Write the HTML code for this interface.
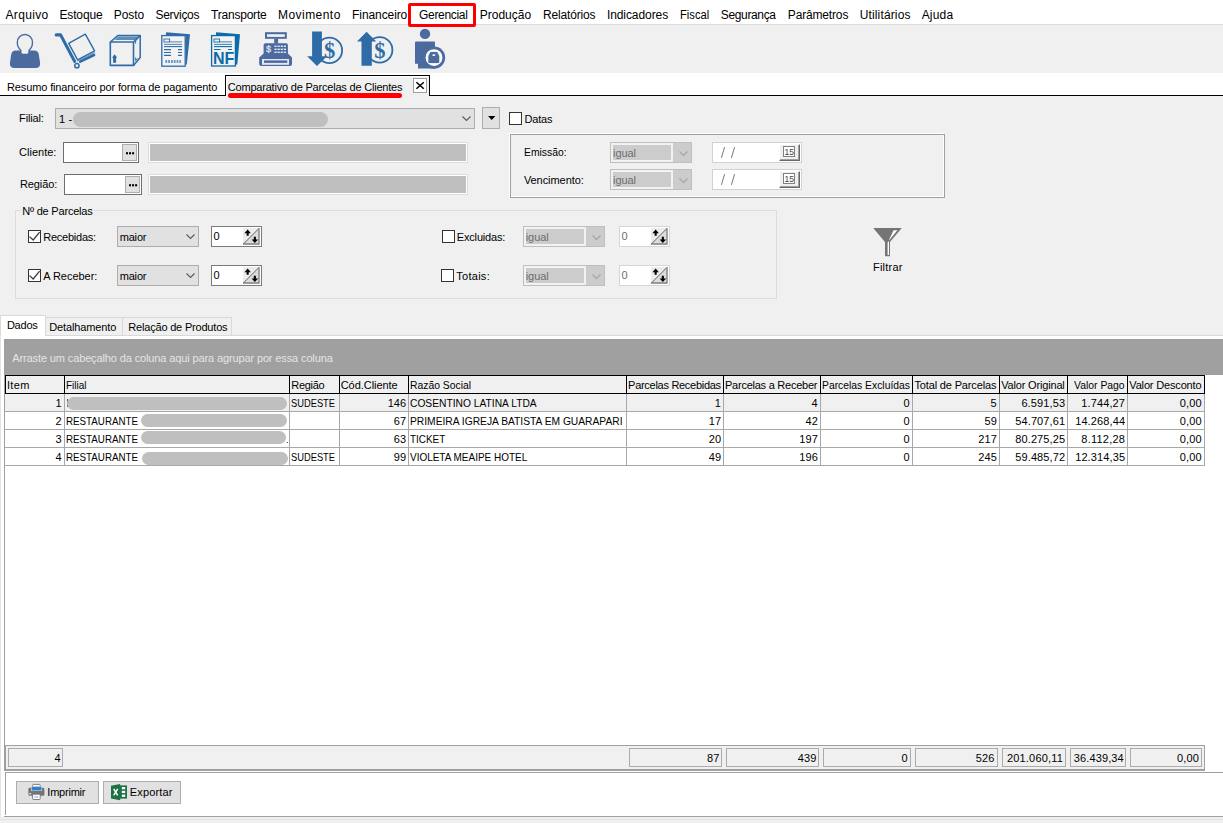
<!DOCTYPE html>
<html><head><meta charset="utf-8"><title>Comparativo de Parcelas de Clientes</title>
<style>
html,body{margin:0;padding:0}
body{width:1223px;height:823px;overflow:hidden;position:relative;background:#f0f0f0;font-family:"Liberation Sans",sans-serif;font-size:11px}
.a{position:absolute;box-sizing:border-box}
.t{position:absolute;white-space:pre;line-height:1;transform-origin:0 0;font-family:"Liberation Sans",sans-serif}
.cb{background:#e1e1e1;border:1px solid #adadad}
.cbd{background:#cccccc;border:1px solid #bfbfbf}
.chk{background:#fff;border:1px solid #333}
.pill{background:#bfbfbf;border-radius:8px}
svg{position:absolute;overflow:visible}
</style></head><body>
<div class="a " style="left:0px;top:0px;width:1223px;height:24px;background:#fff"></div>
<div class="a " style="left:0px;top:24px;width:1223px;height:49px;background:#f0f0f0"></div>
<div class="a " style="left:0px;top:24px;width:1223px;height:1px;background:#dddddd"></div>
<div class="a " style="left:0px;top:73px;width:1223px;height:22px;background:#fff"></div>
<div class="a " style="left:0px;top:95px;width:1223px;height:1px;background:#000"></div>
<div class="a " style="left:408px;top:3px;width:68px;height:24px;border:3px solid #ff0000;border-radius:2px"></div>
<div class="a " style="left:225px;top:75px;width:205px;height:21px;background:#f0f0f0;border:1px solid #000;border-bottom:none;box-shadow:inset 1px 1px 0 #fff"></div>
<div class="a " style="left:228px;top:93px;width:174.2px;height:5px;background:#ff0000;border-radius:2.5px"></div>
<div class="a " style="left:413px;top:78px;width:14px;height:15px;background:#fff;border:1px solid #a0a0a0"></div>
<svg style="left:413px;top:78px" width="14" height="15" viewBox="0 0 14 15"><path d="M3.4 4.2 L10.8 10.8 M10.8 4.2 L3.4 10.8" stroke="#000" stroke-width="1.5" fill="none"/></svg>
<svg style="left:0px;top:0px" width="1223" height="75" viewBox="0 0 1223 75">
<g fill="#4a6aa0">
 <path d="M16 50.5 H34 Q38.2 50.5 38.8 54.5 L40.1 63 Q40.6 68.1 35.5 68.1 H14.5 Q9.4 68.1 9.9 63 L11.2 54.5 Q11.8 50.5 16 50.5 Z"/>
</g>
<path d="M20.8 53.5 V50.2 Q17.3 47 17.3 42.4 A7.6 7.9 0 0 1 32.5 42.4 Q32.5 47 29 50.2 V53.5 Q24.9 55.6 20.8 53.5 Z" fill="#f0f0f0" stroke="#4a6aa0" stroke-width="1.4"/>
<g stroke="#2e6ca8" fill="none" stroke-linecap="round" stroke-linejoin="round">
 <path d="M56.2 34.9 H60.6 L74.6 61.4" stroke-width="3.1"/>
 <path d="M80.2 61.6 L94 55" stroke-width="2.7"/>
 <path d="M68.7 43.3 L85.3 34.2 L94.6 50.8 L77.6 59.8 Z" stroke-width="1.4"/>
 <path d="M77.4 61 L94.4 52.6" stroke-width="0.7"/>
 <circle cx="76.9" cy="65.7" r="2.15" stroke-width="1.5"/>
</g>
<g stroke="#2e6ca8" fill="none" stroke-linejoin="round">
 <rect x="110.3" y="42" width="23.2" height="23.4" stroke-width="1.6"/>
 <path d="M110.3 42 L117.8 35.6 H140.2 L133.5 42" stroke-width="1.5"/>
 <path d="M140.2 35.6 V57.6 L133.5 65.4" stroke-width="1.5"/>
 <path d="M114.5 40 L118.5 36.6 H139 L135 40 Z" fill="#2e6ca8" stroke="none" opacity="0.75"/>
 <path d="M135.6 43.6 V40.8 L137.6 38.9 M135.6 57.4 V60.6 L137.6 58.2" stroke-width="0.9"/>
 <path d="M114.6 54.2 L117.2 57.7 H116.1 V62.8 H113.1 V57.7 H112 Z" fill="#2e6ca8" stroke="none"/>
</g>
<g>
 <path d="M166 32.3 L190 34.3 L186.8 64.6 L185.4 64.6 L185.4 35 L166 35 Z" fill="#2e6ca8"/>
 <rect x="161.8" y="35.6" width="23.4" height="30.6" fill="#f3f3f3" stroke="#2e6ca8" stroke-width="1.3"/>
 <rect x="164" y="39" width="5.6" height="3" fill="none" stroke="#2e6ca8" stroke-width="0.9"/>
 <g stroke="#2e6ca8" stroke-width="1.1">
  <path d="M169.6 41.8 H182" opacity="0.5" stroke-width="1.6"/>
  <path d="M164 44.4 H182" opacity="0.75"/>
  <path d="M164 46.6 H182"/>
  <path d="M164 49.6 H171 M178 49.6 H182"/>
  <path d="M164 52.5 H171 M178 52.5 H182"/>
  <path d="M164 55.4 H171 M178 55.4 H182"/>
  <path d="M165.4 61.6 H181" stroke-width="3" opacity="0.7" stroke-dasharray="1.8 1"/>
 </g>
</g>
<g>
 <path d="M216 32.3 L240 34.3 L237.3 64.6 L235.6 64.6 L235.6 35 L216 35 Z" fill="#0c6ba8"/>
 <rect x="211.6" y="35.6" width="23.8" height="30.4" fill="#f3f3f3" stroke="#0c6ba8" stroke-width="1.3"/>
 <rect x="214" y="39" width="5.6" height="3" fill="none" stroke="#0c6ba8" stroke-width="0.9"/>
 <g stroke="#0c6ba8" stroke-width="1.1">
  <path d="M219.6 41.8 H232" opacity="0.5" stroke-width="1.6"/>
  <path d="M214 44.4 H232" opacity="0.75"/>
  <path d="M214 46.6 H232"/>
  <path d="M214 49.5 H220.6 M228 49.5 H232"/>
 </g>
 <text x="213" y="63.8" font-family="Liberation Sans, sans-serif" font-weight="bold" font-size="16.6" fill="#0c6ba8" textLength="21.4" lengthAdjust="spacingAndGlyphs">NF</text>
</g>
<g fill="#4a6aa0">
 <rect x="265" y="32.2" width="21.8" height="6.6"/>
 <rect x="267" y="34.2" width="17.8" height="2.7" fill="#f0f0f0"/>
 <rect x="274.2" y="38.6" width="3.9" height="5"/>
 <path d="M265.4 43.2 H286.2 Q287.9 43.2 287.9 45 V53.4 L292 57.6 V64 Q292 66 290 66 H261.2 Q259.2 66 259.2 64 V57.6 L263.6 53.4 V45 Q263.6 43.2 265.4 43.2 Z"/>
 <rect x="262" y="59" width="27" height="5.8" fill="#e6e8f2"/><rect x="264" y="60.4" width="23.3" height="2.5" fill="#4a6aa0"/>
 <text x="266" y="51.8" font-family="Liberation Sans, sans-serif" font-size="9.2" fill="#dfe4f0" stroke="#dfe4f0" stroke-width="0.25">$</text>
 <g fill="#f0f2f8">
  <rect x="274.4" y="45.6" width="2.3" height="1.3"/><rect x="277.5" y="45.6" width="2.3" height="1.3"/><rect x="280.6" y="45.6" width="2.3" height="1.3"/><rect x="283.7" y="45.6" width="2.3" height="1.3"/>
  <rect x="274.4" y="48.6" width="2.3" height="1.3"/><rect x="277.5" y="48.6" width="2.3" height="1.3"/><rect x="280.6" y="48.6" width="2.3" height="1.3"/><rect x="283.7" y="48.6" width="2.3" height="1.3"/>
  <rect x="274.4" y="51.6" width="2.3" height="1.3"/><rect x="277.5" y="51.6" width="2.3" height="1.3"/><rect x="280.6" y="51.6" width="2.3" height="1.3"/><rect x="283.7" y="51.6" width="2.3" height="1.3"/>
 </g>
</g>
<g>
 <circle cx="329.4" cy="50.4" r="12.7" fill="none" stroke="#2e6ca8" stroke-width="1.8"/>
 <text x="329.6" y="58" text-anchor="middle" font-family="Liberation Serif, serif" font-weight="bold" font-size="22.5" fill="#2e6ca8">$</text>
 <path d="M312.1 31.6 H321.9 V56.3 H327 L317 66 L307.2 56.3 H312.1 Z" fill="#2e6ca8"/>
</g>
<g>
 <circle cx="379.7" cy="49.9" r="12.7" fill="none" stroke="#2e6ca8" stroke-width="1.8"/>
 <text x="379.9" y="57.6" text-anchor="middle" font-family="Liberation Serif, serif" font-weight="bold" font-size="22.5" fill="#2e6ca8">$</text>
 <path d="M361.5 65.8 V41.5 H357 L366.6 31.7 L376.2 41.5 H371.8 V65.8 Z" fill="#2e6ca8"/>
</g>
<g fill="#4a6aa0">
 <circle cx="425" cy="33.9" r="5.2"/>
 <path d="M416 41.4 H434 Q435 41.4 435 42.4 V68.6 H418 V63.8 H415 V42.4 Q415 41.4 416 41.4 Z"/>
 <circle cx="434" cy="57.6" r="11.2"/>
 <circle cx="434" cy="57.6" r="7.7" fill="#f0f0f0" stroke="#fff" stroke-width="1.5"/>
 <path d="M428.4 62.9 V56 L430.4 51.9 H437.2 L439.2 56 V62.9 Z"/>
 <rect x="432.4" y="54.3" width="2.9" height="1.6" rx="0.6" fill="#f4f4f8"/>
</g>
</svg>
<div class="a cb" style="left:55px;top:108px;width:420px;height:21px;"></div>
<div class="a pill" style="left:73px;top:112px;width:255px;height:15.4px;"></div>
<svg style="left:461.5px;top:115.5px" width="9" height="5" viewBox="0 0 9 5"><path d="M0.5 0.5 L4.5 4.5 L8.5 0.5" fill="none" stroke="#5a5a5a" stroke-width="1.1"/></svg>
<div class="a cb" style="left:482px;top:107px;width:18px;height:22px;"></div>
<svg style="left:487.5px;top:116px" width="8" height="4.5" viewBox="0 0 8 4.5"><path d="M0 0 H7.4 L3.7 4 Z" fill="#000"/></svg>
<div class="a chk" style="left:509px;top:112px;width:13px;height:13px;"></div>
<div class="a " style="left:63px;top:142px;width:76px;height:21px;background:#fff;border:1px solid #6e6e6e"></div>
<div class="a cb" style="left:122px;top:144px;width:15px;height:17px;"></div>
<svg style="left:122px;top:144px" width="15" height="17" viewBox="0 0 15 17"><g fill="#000"><rect x="4" y="8.2" width="2" height="2.1"/><rect x="7.05" y="8.2" width="2" height="2.1"/><rect x="10.1" y="8.2" width="2" height="2.1"/></g></svg>
<div class="a " style="left:64px;top:174px;width:78px;height:21px;background:#fff;border:1px solid #6e6e6e"></div>
<div class="a cb" style="left:125px;top:176px;width:15px;height:17px;"></div>
<svg style="left:125px;top:176px" width="15" height="17" viewBox="0 0 15 17"><g fill="#000"><rect x="4" y="8.2" width="2" height="2.1"/><rect x="7.05" y="8.2" width="2" height="2.1"/><rect x="10.1" y="8.2" width="2" height="2.1"/></g></svg>
<div class="a " style="left:148px;top:142px;width:320px;height:21px;background:#fff;border:1px solid #dcdcdc"></div>
<div class="a " style="left:150px;top:144px;width:316px;height:17px;background:#bfbfbf"></div>
<div class="a " style="left:148px;top:174px;width:320px;height:21px;background:#fff;border:1px solid #dcdcdc"></div>
<div class="a " style="left:150px;top:176px;width:316px;height:17px;background:#bfbfbf"></div>
<div class="a " style="left:509px;top:133px;width:435px;height:64px;border:1px solid #fff"></div>
<div class="a " style="left:510px;top:134px;width:435px;height:64px;border:1px solid #a0a0a0"></div>
<div class="a " style="left:610px;top:142px;width:82px;height:21px;background:#f2f2f2;border:1px solid #bfbfbf"></div>
<div class="a " style="left:613px;top:145px;width:57.8px;height:15px;background:#cccccc"></div>
<div class="a " style="left:673.3px;top:143px;width:17.7px;height:19px;background:#cccccc"></div>
<svg style="left:678.8px;top:150.6px" width="9" height="5" viewBox="0 0 9 5"><path d="M0.5 0.5 L4.5 4.5 L8.5 0.5" fill="none" stroke="#a4a4a4" stroke-width="1.1"/></svg>
<div class="a " style="left:610px;top:169px;width:82px;height:21px;background:#f2f2f2;border:1px solid #bfbfbf"></div>
<div class="a " style="left:613px;top:172px;width:57.8px;height:15px;background:#cccccc"></div>
<div class="a " style="left:673.3px;top:170px;width:17.7px;height:19px;background:#cccccc"></div>
<svg style="left:678.8px;top:177.6px" width="9" height="5" viewBox="0 0 9 5"><path d="M0.5 0.5 L4.5 4.5 L8.5 0.5" fill="none" stroke="#a4a4a4" stroke-width="1.1"/></svg>
<div class="a " style="left:712px;top:142px;width:90px;height:21px;background:#fff;border:1px solid #d2d2d2"></div>
<div class="a " style="left:779px;top:144px;width:21px;height:17px;background:#f0f0f0;border-top:1px solid #fff;border-left:1px solid #fff;border-right:1px solid #696969;border-bottom:1px solid #696969"></div>
<div class="a " style="left:780px;top:145px;width:19px;height:15px;border-right:1px solid #a0a0a0;border-bottom:1px solid #a0a0a0"></div>
<div class="a " style="left:783px;top:146px;width:12px;height:11px;background:#fff;border:1px solid #808080"></div>
<svg style="left:720px;top:146px" width="20" height="13" viewBox="0 0 20 13"><path d="M4.6 1.2 L1.4 11.8 M14.6 1.2 L11.4 11.8" stroke="#808080" stroke-width="1.05" fill="none"/></svg>
<div class="a " style="left:712px;top:169px;width:90px;height:21px;background:#fff;border:1px solid #d2d2d2"></div>
<div class="a " style="left:779px;top:171px;width:21px;height:17px;background:#f0f0f0;border-top:1px solid #fff;border-left:1px solid #fff;border-right:1px solid #696969;border-bottom:1px solid #696969"></div>
<div class="a " style="left:780px;top:172px;width:19px;height:15px;border-right:1px solid #a0a0a0;border-bottom:1px solid #a0a0a0"></div>
<div class="a " style="left:783px;top:173px;width:12px;height:11px;background:#fff;border:1px solid #808080"></div>
<svg style="left:720px;top:173px" width="20" height="13" viewBox="0 0 20 13"><path d="M4.6 1.2 L1.4 11.8 M14.6 1.2 L11.4 11.8" stroke="#808080" stroke-width="1.05" fill="none"/></svg>
<div class="a " style="left:15px;top:210px;width:762px;height:88.5px;border:1px solid #dcdcdc"></div>
<div class="a " style="left:21px;top:204px;width:73px;height:12px;background:#f0f0f0"></div>
<div class="a chk" style="left:28px;top:230px;width:13px;height:13px;"></div>
<svg style="left:28px;top:230px" width="13" height="13" viewBox="0 0 13 13"><path d="M1.5 6.6 L5.2 10 L11.6 2.2" fill="none" stroke="#3a3a3a" stroke-width="1.25"/></svg>
<div class="a chk" style="left:28px;top:269px;width:13px;height:13px;"></div>
<svg style="left:28px;top:269px" width="13" height="13" viewBox="0 0 13 13"><path d="M1.5 6.6 L5.2 10 L11.6 2.2" fill="none" stroke="#3a3a3a" stroke-width="1.25"/></svg>
<div class="a chk" style="left:442px;top:230px;width:13px;height:13px;"></div>
<div class="a chk" style="left:441px;top:269px;width:13px;height:13px;"></div>
<div class="a cb" style="left:117px;top:226px;width:82px;height:21px;"></div>
<svg style="left:185.5px;top:234.3px" width="9" height="5" viewBox="0 0 9 5"><path d="M0.5 0.5 L4.5 4.5 L8.5 0.5" fill="none" stroke="#5a5a5a" stroke-width="1.1"/></svg>
<div class="a cb" style="left:117px;top:265px;width:82px;height:21px;"></div>
<svg style="left:185.5px;top:273.3px" width="9" height="5" viewBox="0 0 9 5"><path d="M0.5 0.5 L4.5 4.5 L8.5 0.5" fill="none" stroke="#5a5a5a" stroke-width="1.1"/></svg>
<div class="a " style="left:523px;top:226px;width:82px;height:21px;background:#f2f2f2;border:1px solid #bfbfbf"></div>
<div class="a " style="left:526px;top:229px;width:57.8px;height:15px;background:#cccccc"></div>
<div class="a " style="left:586.3px;top:227px;width:17.7px;height:19px;background:#cccccc"></div>
<svg style="left:591.8px;top:234.6px" width="9" height="5" viewBox="0 0 9 5"><path d="M0.5 0.5 L4.5 4.5 L8.5 0.5" fill="none" stroke="#a4a4a4" stroke-width="1.1"/></svg>
<div class="a " style="left:523px;top:265px;width:82px;height:21px;background:#f2f2f2;border:1px solid #bfbfbf"></div>
<div class="a " style="left:526px;top:268px;width:57.8px;height:15px;background:#cccccc"></div>
<div class="a " style="left:586.3px;top:266px;width:17.7px;height:19px;background:#cccccc"></div>
<svg style="left:591.8px;top:273.6px" width="9" height="5" viewBox="0 0 9 5"><path d="M0.5 0.5 L4.5 4.5 L8.5 0.5" fill="none" stroke="#a4a4a4" stroke-width="1.1"/></svg>
<div class="a " style="left:211px;top:226px;width:51px;height:21px;background:#fff;border:1px solid #7a7a7a"></div>
<svg style="left:243.2px;top:228.2px" width="16.6" height="16.6" viewBox="0 0 16.6 16.6"><rect x="0" y="0" width="16.6" height="16.6" fill="#ececec"/>
<path d="M0 16.6 L16.6 0 V16.6 Z" fill="#dcdcdc"/>
<path d="M0.2 16.2 L16.2 0.2" stroke="#606060" stroke-width="1"/>
<path d="M0 16 H16 V0.4" stroke="#828282" stroke-width="1.3" fill="none"/>
<path d="M4.65 1.6 L7.9 5.2 H5.7 V7.8 H3.6 V5.2 H1.4 Z" fill="#000"/>
<path d="M11.85 15 L15.1 11.4 H12.9 V8.8 H10.8 V11.4 H8.6 Z" fill="#000"/></svg>
<div class="a " style="left:211px;top:265px;width:51px;height:21px;background:#fff;border:1px solid #7a7a7a"></div>
<svg style="left:243.2px;top:267.2px" width="16.6" height="16.6" viewBox="0 0 16.6 16.6"><rect x="0" y="0" width="16.6" height="16.6" fill="#ececec"/>
<path d="M0 16.6 L16.6 0 V16.6 Z" fill="#dcdcdc"/>
<path d="M0.2 16.2 L16.2 0.2" stroke="#606060" stroke-width="1"/>
<path d="M0 16 H16 V0.4" stroke="#828282" stroke-width="1.3" fill="none"/>
<path d="M4.65 1.6 L7.9 5.2 H5.7 V7.8 H3.6 V5.2 H1.4 Z" fill="#000"/>
<path d="M11.85 15 L15.1 11.4 H12.9 V8.8 H10.8 V11.4 H8.6 Z" fill="#000"/></svg>
<div class="a " style="left:619px;top:226px;width:51px;height:21px;background:#fff;border:1px solid #d6d6d6"></div>
<svg style="left:651.2px;top:228.2px" width="16.6" height="16.6" viewBox="0 0 16.6 16.6"><rect x="0" y="0" width="16.6" height="16.6" fill="#ececec"/>
<path d="M0 16.6 L16.6 0 V16.6 Z" fill="#dcdcdc"/>
<path d="M0.2 16.2 L16.2 0.2" stroke="#606060" stroke-width="1"/>
<path d="M0 16 H16 V0.4" stroke="#828282" stroke-width="1.3" fill="none"/>
<path d="M4.65 1.6 L7.9 5.2 H5.7 V7.8 H3.6 V5.2 H1.4 Z" fill="#000"/>
<path d="M11.85 15 L15.1 11.4 H12.9 V8.8 H10.8 V11.4 H8.6 Z" fill="#000"/></svg>
<div class="a " style="left:619px;top:265px;width:51px;height:21px;background:#fff;border:1px solid #d6d6d6"></div>
<svg style="left:651.2px;top:267.2px" width="16.6" height="16.6" viewBox="0 0 16.6 16.6"><rect x="0" y="0" width="16.6" height="16.6" fill="#ececec"/>
<path d="M0 16.6 L16.6 0 V16.6 Z" fill="#dcdcdc"/>
<path d="M0.2 16.2 L16.2 0.2" stroke="#606060" stroke-width="1"/>
<path d="M0 16 H16 V0.4" stroke="#828282" stroke-width="1.3" fill="none"/>
<path d="M4.65 1.6 L7.9 5.2 H5.7 V7.8 H3.6 V5.2 H1.4 Z" fill="#000"/>
<path d="M11.85 15 L15.1 11.4 H12.9 V8.8 H10.8 V11.4 H8.6 Z" fill="#000"/></svg>
<svg style="left:873px;top:227.8px" width="29" height="28.2" viewBox="0 0 29 28.2"><path d="M0.6 0.6 Q0 0 1 0 H28 Q29 0 28.4 0.6 L17 14 V28.2 H12 V14 Z" fill="#757575"/><path d="M20.6 2.2 H24.4 L16 12.6 V12 Z" fill="#fff"/><path d="M14.6 14.4 L16 13.2 V27 H14.6 Z" fill="#fff"/></svg>
<div class="a " style="left:0px;top:335px;width:1223px;height:482px;background:#fff;border-left:1px solid #e4e4e4"></div>
<div class="a " style="left:45px;top:317px;width:78px;height:19px;background:#f0f0f0;border:1px solid #d9d9d9"></div>
<div class="a " style="left:122px;top:317px;width:110px;height:19px;background:#f0f0f0;border:1px solid #d9d9d9"></div>
<div class="a " style="left:0px;top:315px;width:46px;height:21px;background:#fff;border:1px solid #d9d9d9;border-bottom:none"></div>
<div class="a " style="left:46px;top:335px;width:1177px;height:1px;background:#d9d9d9"></div>
<div class="a " style="left:4px;top:339px;width:1219px;height:36.4px;background:#a0a0a0"></div>
<div class="a " style="left:4px;top:375px;width:1px;height:396px;background:#a0a0a0"></div>
<div class="a " style="left:5px;top:375px;width:1200px;height:19px;background:#f0f0f0;border:1px solid #000"></div>
<div class="a " style="left:64px;top:375px;width:1px;height:19px;background:#000"></div>
<div class="a " style="left:289px;top:375px;width:1px;height:19px;background:#000"></div>
<div class="a " style="left:339px;top:375px;width:1px;height:19px;background:#000"></div>
<div class="a " style="left:408px;top:375px;width:1px;height:19px;background:#000"></div>
<div class="a " style="left:626px;top:375px;width:1px;height:19px;background:#000"></div>
<div class="a " style="left:723px;top:375px;width:1px;height:19px;background:#000"></div>
<div class="a " style="left:820px;top:375px;width:1px;height:19px;background:#000"></div>
<div class="a " style="left:912px;top:375px;width:1px;height:19px;background:#000"></div>
<div class="a " style="left:999px;top:375px;width:1px;height:19px;background:#000"></div>
<div class="a " style="left:1067px;top:375px;width:1px;height:19px;background:#000"></div>
<div class="a " style="left:1127px;top:375px;width:1px;height:19px;background:#000"></div>
<div class="a " style="left:5px;top:394px;width:1199px;height:17px;background:#f0f0f0"></div>
<div class="a " style="left:5px;top:411px;width:1200px;height:1px;background:#a8a8a8"></div>
<div class="a " style="left:5px;top:429px;width:1200px;height:1px;background:#a8a8a8"></div>
<div class="a " style="left:5px;top:447px;width:1200px;height:1px;background:#a8a8a8"></div>
<div class="a " style="left:5px;top:465px;width:1200px;height:1px;background:#a8a8a8"></div>
<div class="a " style="left:64px;top:394px;width:1px;height:72px;background:#a8a8a8"></div>
<div class="a " style="left:289px;top:394px;width:1px;height:72px;background:#a8a8a8"></div>
<div class="a " style="left:339px;top:394px;width:1px;height:72px;background:#a8a8a8"></div>
<div class="a " style="left:408px;top:394px;width:1px;height:72px;background:#a8a8a8"></div>
<div class="a " style="left:626px;top:394px;width:1px;height:72px;background:#a8a8a8"></div>
<div class="a " style="left:723px;top:394px;width:1px;height:72px;background:#a8a8a8"></div>
<div class="a " style="left:820px;top:394px;width:1px;height:72px;background:#a8a8a8"></div>
<div class="a " style="left:912px;top:394px;width:1px;height:72px;background:#a8a8a8"></div>
<div class="a " style="left:999px;top:394px;width:1px;height:72px;background:#a8a8a8"></div>
<div class="a " style="left:1067px;top:394px;width:1px;height:72px;background:#a8a8a8"></div>
<div class="a " style="left:1127px;top:394px;width:1px;height:72px;background:#a8a8a8"></div>
<div class="a " style="left:1204px;top:394px;width:1px;height:72px;background:#a8a8a8"></div>
<div class="a " style="left:66.6px;top:399px;width:1px;height:8px;background:#555"></div>
<div class="a pill" style="left:67px;top:397px;width:220.2px;height:13px;"></div>
<div class="a pill" style="left:141px;top:413.7px;width:146.2px;height:13.2px;"></div>
<div class="a pill" style="left:141px;top:431px;width:144.7px;height:12.5px;"></div>
<div class="a " style="left:286.6px;top:441.6px;width:1.2px;height:1.4px;background:#444"></div>
<div class="a pill" style="left:142px;top:452px;width:145.6px;height:12.6px;"></div>
<div class="a " style="left:5px;top:745px;width:1200px;height:26px;background:#f0f0f0;border:1px solid #a0a0a0;border-bottom:2px solid #a0a0a0"></div>
<div class="a " style="left:8px;top:748px;width:55px;height:19px;border:1px solid #ababab"></div>
<div class="a " style="left:629px;top:748px;width:93px;height:19px;border:1px solid #ababab"></div>
<div class="a " style="left:726px;top:748px;width:93px;height:19px;border:1px solid #ababab"></div>
<div class="a " style="left:823px;top:748px;width:88px;height:19px;border:1px solid #ababab"></div>
<div class="a " style="left:915px;top:748px;width:83px;height:19px;border:1px solid #ababab"></div>
<div class="a " style="left:1002px;top:748px;width:64px;height:19px;border:1px solid #ababab"></div>
<div class="a " style="left:1070px;top:748px;width:56px;height:19px;border:1px solid #ababab"></div>
<div class="a " style="left:1130px;top:748px;width:72px;height:19px;border:1px solid #ababab"></div>
<div class="a " style="left:5px;top:772px;width:1218px;height:43px;background:#fff;border-top:1px solid #a0a0a0;border-left:1px solid #a0a0a0"></div>
<div class="a " style="left:4px;top:816px;width:1219px;height:1px;background:#a0a0a0"></div>
<div class="a cb" style="left:16.2px;top:781px;width:82.8px;height:23px;"></div>
<div class="a cb" style="left:103.3px;top:781px;width:77.8px;height:23px;"></div>
<svg style="left:27.6px;top:784.2px" width="17" height="16" viewBox="0 0 17 16"><rect x="4.6" y="0.4" width="7.6" height="4" rx="0.8" fill="#fff" stroke="#747474" stroke-width="0.9"/><path d="M0.4 5 Q0.4 3.7 1.7 3.7 H15.1 Q16.4 3.7 16.4 5 V10.5 Q16.4 11.8 15.1 11.8 H1.7 Q0.4 11.8 0.4 10.5 Z" fill="#747474"/><rect x="3" y="2.3" width="11" height="4.7" fill="#fff"/><rect x="3.5" y="2.6" width="10.1" height="4" fill="#3a7cc2"/><rect x="1.2" y="9.2" width="2" height="1.2" fill="#f0f0f0"/><rect x="4.6" y="10.2" width="7.6" height="5.3" rx="0.8" fill="#fff" stroke="#747474" stroke-width="0.9"/><path d="M6.4 13 H10.2" stroke="#7aa6d8" stroke-width="1"/></svg>
<svg style="left:111px;top:783.8px" width="16.4" height="16.2" viewBox="0 0 16.4 16.2"><rect x="7" y="1.4" width="9" height="13.2" fill="#1e7145"/><g fill="#fff"><rect x="10.8" y="3" width="3.4" height="2.3"/><rect x="10.8" y="6.8" width="3.4" height="2.3"/><rect x="10.8" y="10.6" width="3.4" height="2.3"/></g><path d="M0 1.8 L9.2 0 V16.2 L0 14.4 Z" fill="#1e7145"/><path d="M2.7 4.9 L6.7 11.3 M6.7 4.9 L2.7 11.3" stroke="#fff" stroke-width="1.5"/></svg>
<div class="a " style="left:0px;top:819px;width:1223px;height:1px;background:#e2e2e2"></div>
<div class="a " style="left:0px;top:820px;width:1223px;height:3px;background:#f0f0f0"></div>
<span class="t" style="left:5.50px;top:9px;font-size:12px;color:#000;letter-spacing:0.335px;">Arquivo</span>
<span class="t" style="left:59.40px;top:9px;font-size:12px;color:#000;letter-spacing:-0.124px;">Estoque</span>
<span class="t" style="left:113.70px;top:9px;font-size:12px;color:#000;letter-spacing:-0.022px;">Posto</span>
<span class="t" style="left:155.50px;top:9px;font-size:12px;color:#000;letter-spacing:-0.288px;">Serviços</span>
<span class="t" style="left:211.00px;top:9px;font-size:12px;color:#000;letter-spacing:-0.210px;">Transporte</span>
<span class="t" style="left:278.00px;top:9px;font-size:12px;color:#000;letter-spacing:0.452px;">Movimento</span>
<span class="t" style="left:352.10px;top:9px;font-size:12px;color:#000;letter-spacing:-0.092px;">Financeiro</span>
<span class="t" style="left:419.00px;top:9px;font-size:12px;color:#000;letter-spacing:-0.307px;">Gerencial</span>
<span class="t" style="left:479.80px;top:9px;font-size:12px;color:#000;letter-spacing:-0.011px;">Produção</span>
<span class="t" style="left:543.10px;top:9px;font-size:12px;color:#000;letter-spacing:-0.170px;">Relatórios</span>
<span class="t" style="left:606.90px;top:9px;font-size:12px;color:#000;letter-spacing:-0.075px;">Indicadores</span>
<span class="t" style="left:679.93px;top:9px;font-size:12px;color:#000;letter-spacing:0.000px;transform:scaleX(0.9326);">Fiscal</span>
<span class="t" style="left:720.80px;top:9px;font-size:12px;color:#000;letter-spacing:-0.356px;">Segurança</span>
<span class="t" style="left:787.80px;top:9px;font-size:12px;color:#000;letter-spacing:-0.159px;">Parâmetros</span>
<span class="t" style="left:859.70px;top:9px;font-size:12px;color:#000;letter-spacing:0.146px;">Utilitários</span>
<span class="t" style="left:921.70px;top:9px;font-size:12px;color:#000;letter-spacing:0.174px;">Ajuda</span>
<span class="t" style="left:7.00px;top:82px;font-size:11px;color:#000;letter-spacing:-0.127px;">Resumo financeiro por forma de pagamento</span>
<span class="t" style="left:227.80px;top:82px;font-size:11px;color:#000;letter-spacing:-0.203px;">Comparativo de Parcelas de Clientes</span>
<span class="t" style="left:19.10px;top:113px;font-size:11px;color:#000;letter-spacing:-0.145px;">Filial:</span>
<span class="t" style="left:59.10px;top:114px;font-size:11px;color:#000;letter-spacing:0.078px;">1 -</span>
<span class="t" style="left:19.10px;top:147px;font-size:11px;color:#000;letter-spacing:0.000px;">Cliente:</span>
<span class="t" style="left:19.90px;top:179px;font-size:11px;color:#000;letter-spacing:-0.070px;">Região:</span>
<span class="t" style="left:524.50px;top:114px;font-size:11px;color:#000;letter-spacing:-0.188px;">Datas</span>
<span class="t" style="left:523.93px;top:147px;font-size:11px;color:#000;letter-spacing:0.000px;transform:scaleX(0.9401);">Emissão:</span>
<span class="t" style="left:523.90px;top:175px;font-size:11px;color:#000;letter-spacing:-0.065px;">Vencimento:</span>
<span class="t" style="left:613.10px;top:148px;font-size:11px;color:#6d6d6d;letter-spacing:-0.113px;">igual</span>
<span class="t" style="left:613.10px;top:175px;font-size:11px;color:#6d6d6d;letter-spacing:-0.113px;">igual</span>
<span class="t" style="left:22.20px;top:206px;font-size:11px;color:#000;letter-spacing:-0.193px;">Nº de Parcelas</span>
<span class="t" style="left:43.20px;top:232px;font-size:11px;color:#000;letter-spacing:-0.227px;">Recebidas:</span>
<span class="t" style="left:43.20px;top:271px;font-size:11px;color:#000;letter-spacing:-0.025px;">A Receber:</span>
<span class="t" style="left:119.70px;top:232px;font-size:11px;color:#000;letter-spacing:-0.179px;">maior</span>
<span class="t" style="left:119.70px;top:271px;font-size:11px;color:#000;letter-spacing:-0.179px;">maior</span>
<span class="t" style="left:213.50px;top:231px;font-size:11px;color:#000;letter-spacing:0.000px;">0</span>
<span class="t" style="left:213.50px;top:270px;font-size:11px;color:#000;letter-spacing:0.000px;">0</span>
<span class="t" style="left:456.80px;top:232px;font-size:11px;color:#000;letter-spacing:-0.171px;">Excluidas:</span>
<span class="t" style="left:456.30px;top:271px;font-size:11px;color:#000;letter-spacing:0.267px;">Totais:</span>
<span class="t" style="left:525.70px;top:232px;font-size:11px;color:#6d6d6d;letter-spacing:-0.038px;">igual</span>
<span class="t" style="left:525.70px;top:271px;font-size:11px;color:#6d6d6d;letter-spacing:-0.038px;">igual</span>
<span class="t" style="left:621.40px;top:231px;font-size:11px;color:#6d6d6d;letter-spacing:0.000px;">0</span>
<span class="t" style="left:621.40px;top:270px;font-size:11px;color:#6d6d6d;letter-spacing:0.000px;">0</span>
<span class="t" style="left:873.00px;top:262px;font-size:11px;color:#000;letter-spacing:0.215px;">Filtrar</span>
<span class="t" style="left:6.90px;top:320px;font-size:11px;color:#000;letter-spacing:-0.224px;">Dados</span>
<span class="t" style="left:49.30px;top:322px;font-size:11px;color:#000;letter-spacing:-0.136px;">Detalhamento</span>
<span class="t" style="left:128.30px;top:322px;font-size:11px;color:#000;letter-spacing:-0.191px;">Relação de Produtos</span>
<span class="t" style="left:12.30px;top:353px;font-size:11px;color:#e4e4e4;letter-spacing:-0.125px;">Arraste um cabeçalho da coluna aqui para agrupar por essa coluna</span>
<span class="t" style="left:6.90px;top:380px;font-size:11px;color:#000;letter-spacing:0.398px;">Item</span>
<span class="t" style="left:66.25px;top:380px;font-size:11px;color:#000;letter-spacing:0.000px;transform:scaleX(0.9064);">Filial</span>
<span class="t" style="left:291.30px;top:380px;font-size:11px;color:#000;letter-spacing:-0.292px;">Região</span>
<span class="t" style="left:340.70px;top:380px;font-size:11px;color:#000;letter-spacing:-0.048px;">Cód.Cliente</span>
<span class="t" style="left:409.93px;top:380px;font-size:11px;color:#000;letter-spacing:0.000px;transform:scaleX(0.9416);">Razão Social</span>
<span class="t" style="left:628.10px;top:380px;font-size:11px;color:#000;letter-spacing:-0.285px;">Parcelas Recebidas</span>
<span class="t" style="left:725.00px;top:380px;font-size:11px;color:#000;letter-spacing:-0.242px;">Parcelas a Receber</span>
<span class="t" style="left:821.93px;top:380px;font-size:11px;color:#000;letter-spacing:0.000px;transform:scaleX(0.9401);">Parcelas Excluídas</span>
<span class="t" style="left:914.50px;top:380px;font-size:11px;color:#000;letter-spacing:-0.156px;">Total de Parcelas</span>
<span class="t" style="left:1001.20px;top:380px;font-size:11px;color:#000;letter-spacing:-0.171px;">Valor Original</span>
<span class="t" style="left:1073.83px;top:380px;font-size:11px;color:#000;letter-spacing:0.000px;transform:scaleX(0.9447);">Valor Pago</span>
<span class="t" style="left:1129.30px;top:380px;font-size:11px;color:#000;letter-spacing:-0.161px;">Valor Desconto</span>
<span class="t" style="left:55.48px;top:398px;font-size:11px;color:#000;letter-spacing:0.000px;">1</span>
<span class="t" style="left:291.38px;top:398px;font-size:11px;color:#000;letter-spacing:0.000px;transform:scaleX(0.8476);">SUDESTE</span>
<span class="t" style="left:387.64px;top:398px;font-size:11px;color:#000;letter-spacing:0.100px;">146</span>
<span class="t" style="left:409.93px;top:398px;font-size:11px;color:#000;letter-spacing:0.000px;transform:scaleX(0.9318);">COSENTINO LATINA LTDA</span>
<span class="t" style="left:714.78px;top:398px;font-size:11px;color:#000;letter-spacing:0.000px;">1</span>
<span class="t" style="left:811.58px;top:398px;font-size:11px;color:#000;letter-spacing:0.000px;">4</span>
<span class="t" style="left:903.58px;top:398px;font-size:11px;color:#000;letter-spacing:0.000px;">0</span>
<span class="t" style="left:990.58px;top:398px;font-size:11px;color:#000;letter-spacing:0.000px;">5</span>
<span class="t" style="left:1021.38px;top:398px;font-size:11px;color:#000;letter-spacing:0.127px;">6.591,53</span>
<span class="t" style="left:1081.28px;top:398px;font-size:11px;color:#000;letter-spacing:0.127px;">1.744,27</span>
<span class="t" style="left:1179.64px;top:398px;font-size:11px;color:#000;letter-spacing:0.179px;">0,00</span>
<span class="t" style="left:55.48px;top:416px;font-size:11px;color:#000;letter-spacing:0.000px;">2</span>
<span class="t" style="left:66.26px;top:416px;font-size:11px;color:#000;letter-spacing:0.000px;transform:scaleX(0.8877);">RESTAURANTE</span>
<span class="t" style="left:393.76px;top:416px;font-size:11px;color:#000;letter-spacing:0.190px;">67</span>
<span class="t" style="left:409.93px;top:416px;font-size:11px;color:#000;letter-spacing:0.000px;transform:scaleX(0.9322);">PRIMEIRA IGREJA BATISTA EM GUARAPARI</span>
<span class="t" style="left:708.66px;top:416px;font-size:11px;color:#000;letter-spacing:0.190px;">17</span>
<span class="t" style="left:805.46px;top:416px;font-size:11px;color:#000;letter-spacing:0.190px;">42</span>
<span class="t" style="left:903.58px;top:416px;font-size:11px;color:#000;letter-spacing:0.000px;">0</span>
<span class="t" style="left:984.46px;top:416px;font-size:11px;color:#000;letter-spacing:0.190px;">59</span>
<span class="t" style="left:1015.26px;top:416px;font-size:11px;color:#000;letter-spacing:0.113px;">54.707,61</span>
<span class="t" style="left:1075.16px;top:416px;font-size:11px;color:#000;letter-spacing:0.113px;">14.268,44</span>
<span class="t" style="left:1179.64px;top:416px;font-size:11px;color:#000;letter-spacing:0.179px;">0,00</span>
<span class="t" style="left:55.48px;top:434px;font-size:11px;color:#000;letter-spacing:0.000px;">3</span>
<span class="t" style="left:66.26px;top:434px;font-size:11px;color:#000;letter-spacing:0.000px;transform:scaleX(0.8877);">RESTAURANTE</span>
<span class="t" style="left:393.76px;top:434px;font-size:11px;color:#000;letter-spacing:0.190px;">63</span>
<span class="t" style="left:409.95px;top:434px;font-size:11px;color:#000;letter-spacing:0.000px;transform:scaleX(0.9023);">TICKET</span>
<span class="t" style="left:708.66px;top:434px;font-size:11px;color:#000;letter-spacing:0.190px;">20</span>
<span class="t" style="left:799.34px;top:434px;font-size:11px;color:#000;letter-spacing:0.100px;">197</span>
<span class="t" style="left:903.58px;top:434px;font-size:11px;color:#000;letter-spacing:0.000px;">0</span>
<span class="t" style="left:978.34px;top:434px;font-size:11px;color:#000;letter-spacing:0.100px;">217</span>
<span class="t" style="left:1015.26px;top:434px;font-size:11px;color:#000;letter-spacing:0.113px;">80.275,25</span>
<span class="t" style="left:1081.28px;top:434px;font-size:11px;color:#000;letter-spacing:0.243px;">8.112,28</span>
<span class="t" style="left:1179.64px;top:434px;font-size:11px;color:#000;letter-spacing:0.179px;">0,00</span>
<span class="t" style="left:55.48px;top:452px;font-size:11px;color:#000;letter-spacing:0.000px;">4</span>
<span class="t" style="left:66.26px;top:452px;font-size:11px;color:#000;letter-spacing:0.000px;transform:scaleX(0.8877);">RESTAURANTE</span>
<span class="t" style="left:291.38px;top:452px;font-size:11px;color:#000;letter-spacing:0.000px;transform:scaleX(0.8476);">SUDESTE</span>
<span class="t" style="left:393.76px;top:452px;font-size:11px;color:#000;letter-spacing:0.190px;">99</span>
<span class="t" style="left:409.95px;top:452px;font-size:11px;color:#000;letter-spacing:0.000px;transform:scaleX(0.9058);">VIOLETA MEAIPE HOTEL</span>
<span class="t" style="left:708.66px;top:452px;font-size:11px;color:#000;letter-spacing:0.190px;">49</span>
<span class="t" style="left:799.34px;top:452px;font-size:11px;color:#000;letter-spacing:0.100px;">196</span>
<span class="t" style="left:903.58px;top:452px;font-size:11px;color:#000;letter-spacing:0.000px;">0</span>
<span class="t" style="left:978.34px;top:452px;font-size:11px;color:#000;letter-spacing:0.100px;">245</span>
<span class="t" style="left:1015.26px;top:452px;font-size:11px;color:#000;letter-spacing:0.113px;">59.485,72</span>
<span class="t" style="left:1075.16px;top:452px;font-size:11px;color:#000;letter-spacing:0.113px;">12.314,35</span>
<span class="t" style="left:1179.64px;top:452px;font-size:11px;color:#000;letter-spacing:0.179px;">0,00</span>
<span class="t" style="left:54.38px;top:753px;font-size:11px;color:#000;letter-spacing:0.000px;">4</span>
<span class="t" style="left:706.96px;top:753px;font-size:11px;color:#000;letter-spacing:0.190px;">87</span>
<span class="t" style="left:797.74px;top:753px;font-size:11px;color:#000;letter-spacing:0.100px;">439</span>
<span class="t" style="left:901.38px;top:753px;font-size:11px;color:#000;letter-spacing:0.000px;">0</span>
<span class="t" style="left:975.74px;top:753px;font-size:11px;color:#000;letter-spacing:0.100px;">526</span>
<span class="t" style="left:1006.94px;top:753px;font-size:11px;color:#000;letter-spacing:0.190px;">201.060,11</span>
<span class="t" style="left:1073.86px;top:753px;font-size:11px;color:#000;letter-spacing:0.113px;">36.439,34</span>
<span class="t" style="left:1177.04px;top:753px;font-size:11px;color:#000;letter-spacing:0.179px;">0,00</span>
<span class="t" style="left:47.30px;top:787px;font-size:11px;color:#000;letter-spacing:-0.217px;">Imprimir</span>
<span class="t" style="left:129.80px;top:787px;font-size:11px;color:#000;letter-spacing:0.132px;">Exportar</span>
<span class="t" style="left:784.50px;top:148px;font-size:8.5px;color:#444;letter-spacing:-0.069px;">15</span>
<span class="t" style="left:784.50px;top:175px;font-size:8.5px;color:#444;letter-spacing:-0.069px;">15</span>
</body></html>
